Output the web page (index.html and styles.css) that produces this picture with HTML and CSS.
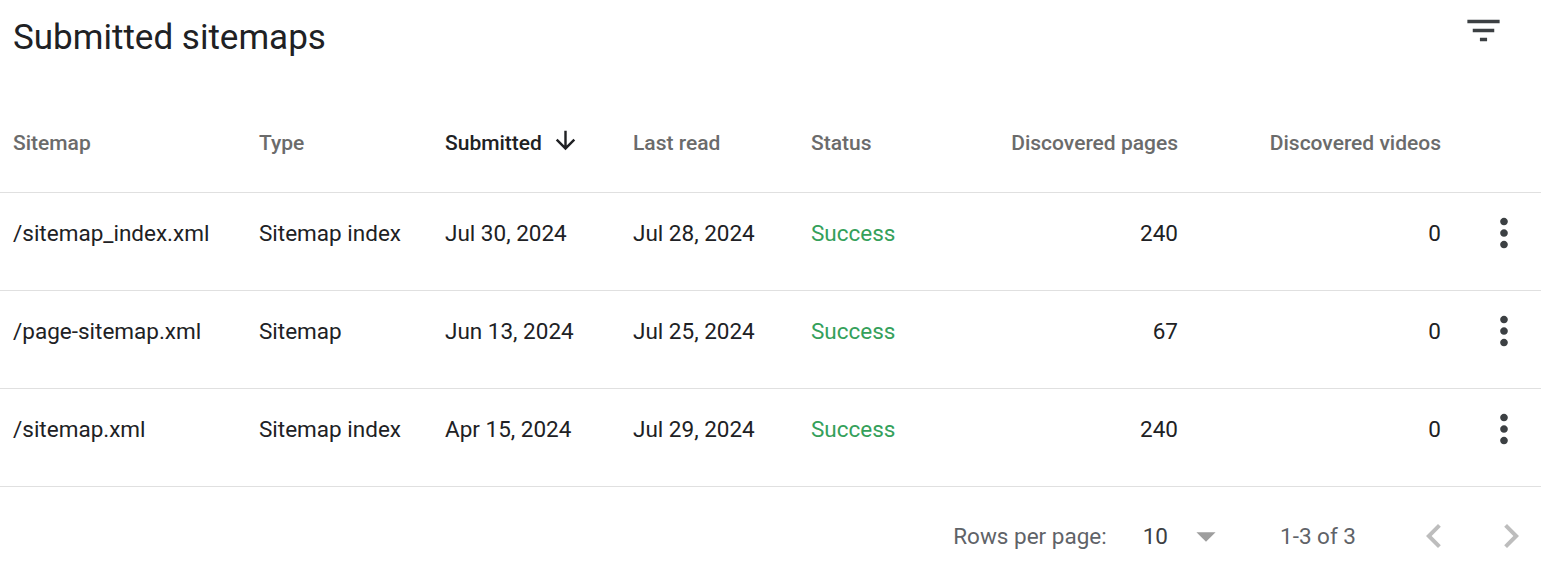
FILE: index.html
```html
<!DOCTYPE html>
<html>
<head>
<meta charset="utf-8">
<link rel="stylesheet" href="styles.css">
</head>
<body>
<div class="card">
  <div class="topbar">
    <h1 class="title">Submitted sitemaps</h1>
    <svg class="filter" viewBox="0 0 24 24"><path d="M10 18h4v-2h-4v2zM3 6v2h18V6H3zm3 7h12v-2H6v2z"/></svg>
  </div>
  <div class="table">
    <div class="row head">
      <div class="c c1">Sitemap</div>
      <div class="c c2">Type</div>
      <div class="c c3 sorted">Submitted<svg class="arrow" viewBox="0 0 24 24"><path d="M20 12l-1.41-1.41L13 16.17V4h-2v12.17l-5.58-5.59L4 12l8 8 8-8z"/></svg></div>
      <div class="c c4">Last read</div>
      <div class="c c5">Status</div>
      <div class="c c6 num">Discovered pages</div>
      <div class="c c7 num">Discovered videos</div>
      <div class="c c8"></div>
    </div>
    <div class="row body">
      <div class="c c1">/sitemap_index.xml</div>
      <div class="c c2">Sitemap index</div>
      <div class="c c3">Jul 30, 2024</div>
      <div class="c c4">Jul 28, 2024</div>
      <div class="c c5 ok">Success</div>
      <div class="c c6 num">240</div>
      <div class="c c7 num">0</div>
      <div class="c c8"><svg class="kebab" viewBox="0 0 24 24"><path d="M12 8c1.1 0 2-.9 2-2s-.9-2-2-2-2 .9-2 2 .9 2 2 2zm0 2c-1.1 0-2 .9-2 2s.9 2 2 2 2-.9 2-2-.9-2-2-2zm0 6c-1.1 0-2 .9-2 2s.9 2 2 2 2-.9 2-2-.9-2-2-2z"/></svg></div>
    </div>
    <div class="row body">
      <div class="c c1">/page-sitemap.xml</div>
      <div class="c c2">Sitemap</div>
      <div class="c c3">Jun 13, 2024</div>
      <div class="c c4">Jul 25, 2024</div>
      <div class="c c5 ok">Success</div>
      <div class="c c6 num">67</div>
      <div class="c c7 num">0</div>
      <div class="c c8"><svg class="kebab" viewBox="0 0 24 24"><path d="M12 8c1.1 0 2-.9 2-2s-.9-2-2-2-2 .9-2 2 .9 2 2 2zm0 2c-1.1 0-2 .9-2 2s.9 2 2 2 2-.9 2-2-.9-2-2-2zm0 6c-1.1 0-2 .9-2 2s.9 2 2 2 2-.9 2-2-.9-2-2-2z"/></svg></div>
    </div>
    <div class="row body">
      <div class="c c1">/sitemap.xml</div>
      <div class="c c2">Sitemap index</div>
      <div class="c c3">Apr 15, 2024</div>
      <div class="c c4">Jul 29, 2024</div>
      <div class="c c5 ok">Success</div>
      <div class="c c6 num">240</div>
      <div class="c c7 num">0</div>
      <div class="c c8"><svg class="kebab" viewBox="0 0 24 24"><path d="M12 8c1.1 0 2-.9 2-2s-.9-2-2-2-2 .9-2 2 .9 2 2 2zm0 2c-1.1 0-2 .9-2 2s.9 2 2 2 2-.9 2-2-.9-2-2-2zm0 6c-1.1 0-2 .9-2 2s.9 2 2 2 2-.9 2-2-.9-2-2-2z"/></svg></div>
    </div>
  </div>
  <div class="footer">
    <span class="rpp">Rows per page:</span>
    <span class="count">10</span>
    <svg class="drop" viewBox="0 0 24 24"><path d="M7 10l5 5 5-5z"/></svg>
    <span class="range">1-3 of 3</span>
    <svg class="chev first" viewBox="0 0 24 24"><path d="M15.41 7.41L14 6l-6 6 6 6 1.41-1.41L10.83 12z"/></svg>
    <svg class="chev" viewBox="0 0 24 24"><path d="M10 6L8.59 7.41 13.17 12l-4.58 4.59L10 18l6-6z"/></svg>
  </div>
</div>
</body>
</html>
```

FILE: styles.css
```css
html, body {
  margin: 0;
  padding: 0;
  background: #ffffff;
}
body {
  font-family: Roboto, "Liberation Sans", sans-serif;
  color: #202124;
  width: 1541px;
  height: 565px;
  overflow: hidden;
}
.topbar {
  display: flex;
  justify-content: space-between;
  align-items: flex-start;
  height: 95px;
  padding: 0 36px 0 13px;
}
.title {
  margin: 0;
  font-weight: 400;
  font-size: 35px;
  line-height: 76px;
  color: #202124;
}
.filter {
  width: 43px;
  height: 43px;
  margin-top: 9px;
  fill: #3c4043;
}
.row {
  display: grid;
  grid-template-columns: 246px 186px 188px 178px 189px 178px 263px 100px;
  padding-left: 13px;
  height: 97px;
  align-items: center;
  border-bottom: 1px solid #e0e0e0;
  font-size: 22.5px;
}
.row.head {
  box-sizing: border-box;
  height: 98px;
  padding-bottom: 2px;
}
.row.body {
  box-sizing: border-box;
  height: 98px;
  padding-bottom: 18px;
}
.head {
  font-weight: 500;
  color: #6b6b6b;
  font-size: 21px;
}
.c {
  white-space: nowrap;
}
.num {
  text-align: right;
}
.sorted {
  color: #202124;
  display: flex;
  align-items: center;
}
.arrow {
  width: 29px;
  height: 29px;
  margin-left: 9px;
  margin-top: -4px;
  fill: #202124;
}
.ok {
  color: #34a05a;
}
.c8 {
  display: flex;
  padding-left: 40px;
}
.kebab {
  width: 46px;
  height: 46px;
  fill: #3c4043;
}
.footer {
  display: flex;
  align-items: center;
  box-sizing: border-box;
  height: 78px;
  padding-top: 20px;
  padding-right: 6px;
  justify-content: flex-end;
  font-size: 22.5px;
  color: #5f6368;
}
.rpp {
  margin-right: 36px;
}
.count {
  color: #3c4043;
}
.drop {
  width: 46px;
  height: 46px;
  margin-left: 15px;
  fill: #9e9e9e;
}
.range {
  margin-left: 51px;
  margin-right: 54px;
}
.chev {
  width: 48px;
  height: 48px;
  fill: #bdbdbd;
}
.chev.first {
  margin-right: 29px;
}
```
